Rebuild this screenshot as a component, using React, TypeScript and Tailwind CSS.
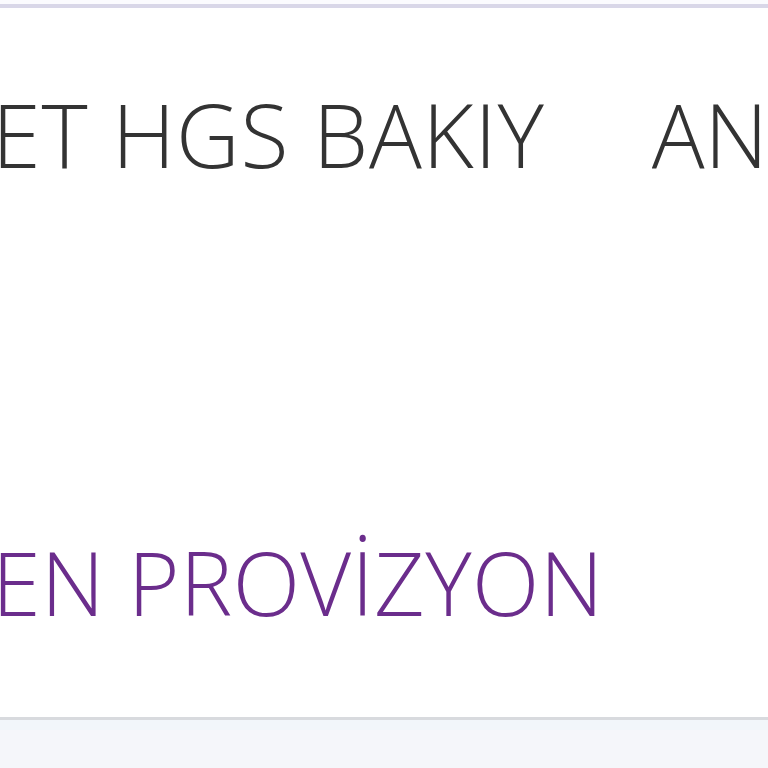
export default function App() {
  return (
    <div className="w-[768px] h-[768px] overflow-hidden bg-[#f5f6fa] flex flex-col font-['Open_Sans',sans-serif] font-light">
      <div className="h-[4px] bg-[#fbfbfe]" />
      <div className="h-[4px] bg-[#d9d7e8]" />
      <div className="h-[709px] bg-white flex flex-col pt-[82px]">
        <div className="flex text-[88px] leading-none text-[#333333] whitespace-nowrap">
          <div className="w-[660px] -ml-[8px] overflow-hidden tracking-[0.8px]">ET HGS BAKIY</div>
          <div className="overflow-hidden">AN</div>
        </div>
        <div className="mt-[360px] -ml-[8px] text-[88px] leading-none tracking-[0.4px] text-[#6b2d8c] whitespace-nowrap">
          EN PROVİZYON
        </div>
      </div>
      <div className="h-[3px] bg-[#d8dade]" />
      <div className="h-[10px] bg-[#f2f6fa]" />
      <div className="flex-1 bg-[#f5f6fa]" />
    </div>
  );
}
